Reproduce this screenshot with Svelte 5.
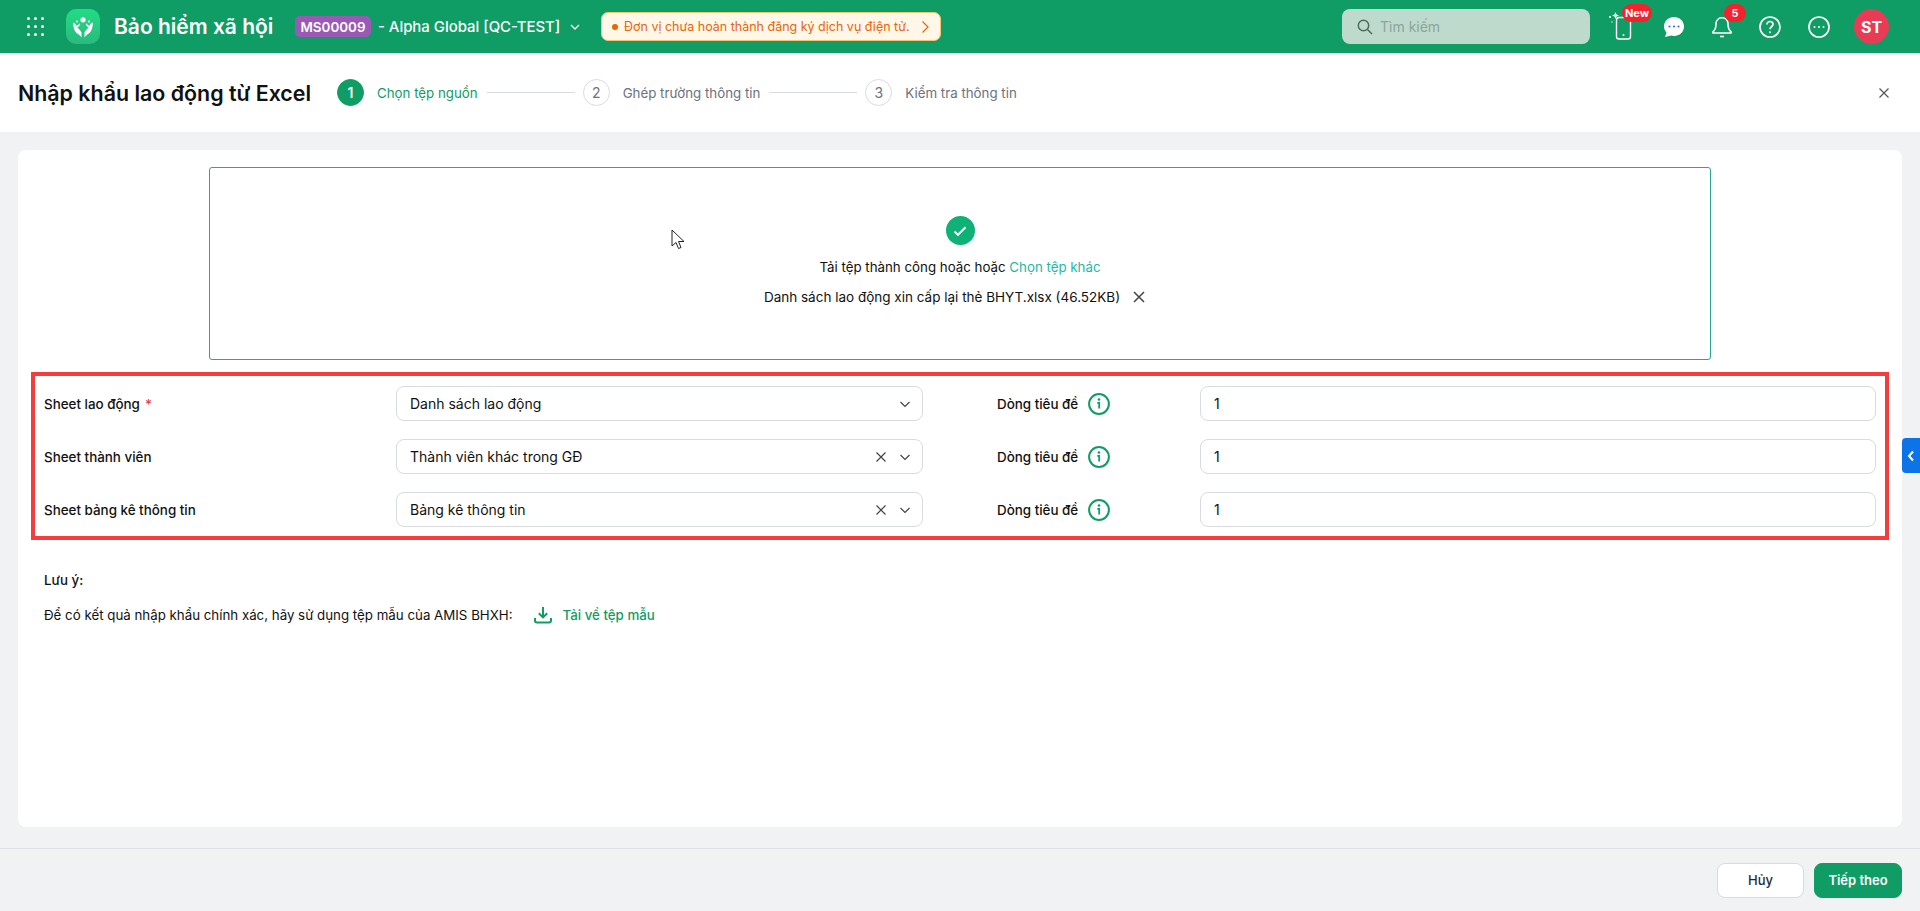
<script>
  const steps = [
    { n: 1, label: 'Chọn tệp nguồn', active: true },
    { n: 2, label: 'Ghép trường thông tin' },
    { n: 3, label: 'Kiểm tra thông tin' }
  ];
  const sheets = [
    { label: 'Sheet lao động', required: true, value: 'Danh sách lao động', clearable: false },
    { label: 'Sheet thành viên', value: 'Thành viên khác trong GĐ', clearable: true },
    { label: 'Sheet bảng kê thông tin', value: 'Bảng kê thông tin', clearable: true }
  ];
</script>

<div class="page">
  <header class="topbar">
    <div class="dots">
      {#each Array(9) as _}<i></i>{/each}
    </div>
    <div class="logo">
      <svg width="24" height="24" viewBox="0 0 24 24" fill="#fff">
        <circle cx="12" cy="4.800" r="2.600" />
        <circle cx="6" cy="6.500" r="1.100" />
        <circle cx="18" cy="6.500" r="1.100" />
        <path d="M2 7.500c1.800.4 2.900 1.500 3.400 3.200 1.200-.2 2.300-1 3-2.200l.9.600c-.7 1.900-1.800 3.100-3.300 3.700 2 1 3.500 2.600 4.500 4.700V22.500c-1.300-1.900-3-3.100-4.900-4.400C3.300 16.200 2.200 12 2 7.500z" />
        <path d="M22 7.500c-1.800.4-2.900 1.500-3.400 3.200-1.200-.2-2.300-1-3-2.200l-.9.600c.7 1.900 1.800 3.100 3.300 3.700-2 1-3.500 2.600-4.500 4.700V22.500c1.300-1.900 3-3.100 4.900-4.400C20.700 16.200 21.800 12 22 7.500z" />
      </svg>
    </div>
    <div class="app-name">Bảo hiểm xã hội</div>
    <span class="code">MS00009</span>
    <span class="org">- Alpha Global [QC-TEST]</span>
    <svg class="org-caret" width="12" height="12" viewBox="0 0 12 12" fill="none" stroke="#fff" stroke-width="1.300"><path d="M2 4l4 4 4-4" /></svg>
    <div class="warn">
      <i class="warn-dot"></i>
      <span>Đơn vị chưa hoàn thành đăng ký dịch vụ điện tử.</span>
      <svg width="10" height="14" viewBox="0 0 10 14" fill="none" stroke="#e8650a" stroke-width="1.200"><path d="M2.500 1.500L8 7l-5.500 5.500" /></svg>
    </div>

    <div class="spacer"></div>

    <div class="search">
      <svg width="18" height="18" viewBox="0 0 18 18" fill="none" stroke="#53685f" stroke-width="1.500"><circle cx="7.500" cy="7.500" r="5.200" /><path d="M11.500 11.500L16 16" /></svg>
      <span>Tìm kiếm</span>
    </div>

    <div class="tools">
      <div class="tool phone">
        <svg width="36" height="36" viewBox="0 0 36 36" fill="none">
          <rect x="10.500" y="8.500" width="14" height="21.500" rx="2.500" stroke="#fff" stroke-width="1.400" />
          <circle cx="17.500" cy="26" r="1" fill="#fff" />
          <path d="M9.500 3l1 2.500 2.500 1-2.500 1-1 2.500-1-2.500L6 6.500l2.500-1z" fill="#fff" />
          <circle cx="4" cy="8" r="1" fill="#fff" />
          <circle cx="6" cy="13" r=".7" fill="#fff" />
        </svg>
        <span class="badge new">New</span>
      </div>
      <div class="tool chat">
        <svg width="24" height="24" viewBox="0 0 24 24">
          <path d="M12 2c5.500 0 10 4.100 10 9.500S17.500 21 12 21c-1 0-2-.1-2.900-.4L3 22l1.500-4.400C3 15.900 2 13.800 2 11.500 2 6.100 6.500 2 12 2z" fill="#fff" />
          <circle cx="7.500" cy="11.500" r="1.100" fill="#3d6ff0" />
          <circle cx="12" cy="11.500" r="1.100" fill="#3d6ff0" />
          <circle cx="16.500" cy="11.500" r="1.100" fill="#3d6ff0" />
        </svg>
      </div>
      <div class="tool bell">
        <svg width="24" height="24" viewBox="0 0 24 24" fill="none" stroke="#fff" stroke-width="1.600">
          <path d="M12 2.800c-3.800 0-6 3-6 6.400 0 4-1 5.800-3 7.600-.5.500-.2 1.200.5 1.200h17c.7 0 1-.7.500-1.200-2-1.800-3-3.600-3-7.600 0-3.400-2.200-6.400-6-6.400z" />
          <path d="M10 21.500h4" />
        </svg>
        <span class="badge count">5</span>
      </div>
      <div class="tool help">
        <svg width="24" height="24" viewBox="0 0 24 24" fill="none" stroke="#fff" stroke-width="1.700">
          <circle cx="12" cy="12" r="10" />
          <path d="M9 9.500c0-1.800 1.300-3 3-3s3 1.200 3 2.800c0 2.400-3 2.500-3 5" />
          <circle cx="12" cy="17.300" r="1" fill="#fff" stroke="none" />
        </svg>
      </div>
      <div class="tool">
        <svg width="24" height="24" viewBox="0 0 24 24" fill="none" stroke="#fff" stroke-width="1.700">
          <circle cx="12" cy="12" r="10" />
          <circle cx="7.500" cy="12" r="1" fill="#fff" stroke="none" />
          <circle cx="12" cy="12" r="1" fill="#fff" stroke="none" />
          <circle cx="16.500" cy="12" r="1" fill="#fff" stroke="none" />
        </svg>
      </div>
      <div class="avatar">ST</div>
    </div>
  </header>

  <div class="titlebar">
    <h1>Nhập khẩu lao động từ Excel</h1>
    <ol class="steps">
      {#each steps as step, i}
        <li class="step" class:active={step.active}>
          <span class="num">{step.n}</span>
          <span class="step-label">{step.label}</span>
          {#if i < steps.length - 1}<span class="line"></span>{/if}
        </li>
      {/each}
    </ol>
    <svg class="close" width="12" height="12" viewBox="0 0 12 12" stroke="#555" stroke-width="1.200"><path d="M1.500 1.500l9 9M10.500 1.500l-9 9" /></svg>
  </div>

  <main class="main">
    <section class="card">
      <div class="upload">
        <div class="ok">
          <svg width="16" height="16" viewBox="0 0 16 16" fill="none" stroke="#fff" stroke-width="2"><path d="M2.500 8.500l3.500 3.300 7.500-7.500" /></svg>
        </div>
        <p class="upload-msg">Tải tệp thành công hoặc hoặc <a href="#top">Chọn tệp khác</a></p>
        <p class="file">
          <span>Danh sách lao động xin cấp lại thẻ BHYT.xlsx (46.52KB)</span>
          <svg width="12" height="12" viewBox="0 0 12 12" stroke="#444" stroke-width="1.500"><path d="M1 1l10 10M11 1L1 11" /></svg>
        </p>
      </div>

      <div class="sheets">
        {#each sheets as s}
          <div class="label">{s.label}{#if s.required}<em>*</em>{/if}</div>
          <div class="select">
            <span class="value">{s.value}</span>
            {#if s.clearable}
              <svg class="clear" width="12" height="12" viewBox="0 0 12 12" stroke="#444" stroke-width="1.200"><path d="M1.500 1.500l9 9M10.500 1.500l-9 9" /></svg>
            {/if}
            <svg width="12" height="12" viewBox="0 0 12 12" fill="none" stroke="#444" stroke-width="1.200"><path d="M1.500 4l4.500 4.500L10.500 4" /></svg>
          </div>
          <div></div>
          <div class="label right">
            Dòng tiêu đề
            <svg width="22" height="22" viewBox="0 0 22 22" fill="none" stroke="#0f9d66">
              <circle cx="11" cy="11" r="9.900" stroke-width="2" />
              <circle cx="11" cy="6.500" r="1.300" fill="#0f9d66" stroke="none" />
              <path d="M9.300 9.800H11.200V15.500" stroke-width="1.800" />
            </svg>
          </div>
          <div class="input">1</div>
        {/each}
      </div>

      <div class="notes">
        <p class="note-title">Lưu ý:</p>
        <p class="note-line">
          <span>Để có kết quả nhập khẩu chính xác, hãy sử dụng tệp mẫu của AMIS BHXH:</span>
          <a href="#top" class="download">
            <svg width="18" height="18" viewBox="0 0 18 18" fill="none" stroke="#109c65" stroke-width="2"><path d="M9 1v10M4.800 7.200L9 11.400l4.200-4.200M1 12v2.500a2 2 0 0 0 2 2h12a2 2 0 0 0 2-2V12" /></svg>
            Tải về tệp mẫu
          </a>
        </p>
      </div>
    </section>
    <button class="side-tab" aria-label="Mở rộng">
      <svg width="8" height="12" viewBox="0 0 8 12" fill="none" stroke="#fff" stroke-width="2"><path d="M6 1.500L2 6l4 4.500" /></svg>
    </button>
  </main>

  <footer class="footer">
    <button class="btn">Hủy</button>
    <button class="btn primary">Tiếp theo</button>
  </footer>

  <svg class="cursor" width="14" height="22" viewBox="0 0 14 22" fill="#fff" stroke="#222" stroke-width="1"><path d="M1 1v16l4-3.500 2.500 6 2.500-1-2.500-6H13z" /></svg>
</div>

<style>
  :global(body) {
    margin: 0;
    background: #f0f2f4;
    font-family: Inter, "Noto Sans", sans-serif;
    color: #111;
  }
  * {
    box-sizing: border-box;
  }
  p, h1, ol {
    margin: 0;
    padding: 0;
  }
  a {
    text-decoration: none;
  }
  .page {
    position: relative;
    height: 911px;
    display: flex;
    flex-direction: column;
    overflow: hidden;
  }

  /* top bar */
  .topbar {
    height: 53px;
    flex: none;
    display: flex;
    align-items: center;
    background: #109c65;
    color: #fff;
    padding: 0 31px 0 27px;
  }
  .dots {
    display: grid;
    grid-template-columns: repeat(3, 3px);
    gap: 5px 4px;
    margin-right: 22px;
    width: 17px;
  }
  .dots i {
    width: 3px;
    height: 3px;
    border-radius: 50%;
    background: #fff;
  }
  .logo {
    width: 34px;
    height: 35px;
    border-radius: 10px;
    background: linear-gradient(180deg, #22dc84, #2ab97f);
    display: flex;
    align-items: center;
    justify-content: center;
    margin-right: 14px;
  }
  .app-name {
    font-size: 21px;
    font-weight: 600;
    width: 181px;
    white-space: nowrap;
  }
  .code {
    width: 76px;
    height: 21px;
    border-radius: 5px;
    background: #9b59b6;
    font-size: 13.4px;
    font-weight: 600;
    display: flex;
    align-items: center;
    justify-content: center;
    margin-right: 7px;
  }
  .org {
    font-size: 14.9px;
    font-weight: 500;
    white-space: nowrap;
    width: 191px;
  }
  .org-caret {
    margin-right: 20px;
  }
  .warn {
    width: 340px;
    height: 29px;
    border-radius: 7px;
    background: #fff7e8;
    border: 1px solid #f6c56f;
    color: #e8650a;
    font-size: 12.5px;
    display: flex;
    align-items: center;
    padding: 0 10px;
    gap: 6px;
  }
  .warn span {
    flex: 1;
    white-space: nowrap;
  }
  .warn-dot {
    flex: none;
    width: 6px;
    height: 6px;
    border-radius: 50%;
    background: #e8650a;
  }
  .spacer {
    flex: 1;
  }
  .search {
    width: 248px;
    height: 35px;
    border-radius: 8px;
    background: #bedacd;
    display: flex;
    align-items: center;
    gap: 6px;
    padding: 0 14px;
    color: #8aa69a;
    font-size: 14px;
  }
  .tools {
    display: flex;
    align-items: center;
    margin-left: 16px;
  }
  .tool {
    position: relative;
    width: 36px;
    height: 36px;
    margin-right: 13px;
    display: flex;
    align-items: center;
    justify-content: center;
  }
  .phone {
    margin-right: 14px;
  }
  .chat, .bell {
    margin-right: 12px;
  }
  .badge {
    position: absolute;
    top: -5px;
    height: 18px;
    border-radius: 9px;
    background: #f5222d;
    color: #fff;
    font-size: 11px;
    font-weight: 700;
    display: flex;
    align-items: center;
    justify-content: center;
  }
  .badge.new {
    left: 16px;
    width: 30px;
  }
  .badge.count {
    left: 20px;
    width: 22px;
  }
  .avatar {
    width: 35px;
    height: 35px;
    border-radius: 50%;
    background: #e93b55;
    font-size: 16px;
    font-weight: 700;
    display: flex;
    align-items: center;
    justify-content: center;
    margin-left: 4px;
  }

  /* title row with the steps */
  .titlebar {
    height: 79px;
    flex: none;
    background: #fff;
    display: flex;
    align-items: center;
    padding: 0 30px 0 18px;
  }
  h1 {
    font-size: 21.4px;
    font-weight: 600;
    width: 319px;
    white-space: nowrap;
  }
  .steps {
    list-style: none;
    display: flex;
    flex: 1;
  }
  .step {
    display: flex;
    align-items: center;
    font-size: 13.3px;
    color: #6b7280;
    white-space: nowrap;
  }
  .num {
    width: 27px;
    height: 27px;
    border-radius: 50%;
    border: 1px solid #d8dbe0;
    display: flex;
    align-items: center;
    justify-content: center;
    font-size: 14px;
    margin-right: 13px;
  }
  .line {
    width: 88px;
    height: 1px;
    background: #d8dbe0;
    margin: 0 8px 0 9px;
  }
  .step.active {
    color: #109c65;
  }
  .active .num {
    background: #109c65;
    border-color: #109c65;
    color: #fff;
    font-weight: 600;
  }

  /* main card */
  .main {
    flex: 1;
    position: relative;
    padding: 18px 18px 21px;
    display: flex;
    min-height: 0;
  }
  .card {
    flex: 1;
    background: #fff;
    border-radius: 8px;
    padding: 17px 13px 0;
  }
  .upload {
    width: 1502px;
    height: 193px;
    margin: 0 auto 12px;
    border: 1px solid #26a69a;
    border-radius: 3px;
    display: flex;
    flex-direction: column;
    align-items: center;
    padding-top: 48px;
    font-size: 13.3px;
  }
  .ok {
    width: 29px;
    height: 29px;
    border-radius: 50%;
    background: #0fb176;
    display: flex;
    align-items: center;
    justify-content: center;
    margin-bottom: 14px;
  }
  .upload-msg {
    height: 16px;
    line-height: 16px;
    margin-bottom: 14px;
  }
  .upload-msg a {
    color: #1cb9a6;
  }
  .file {
    display: flex;
    align-items: center;
    gap: 13px;
    height: 16px;
    line-height: 16px;
    font-size: 13.5px;
    margin-right: 11px;
  }
  .sheets {
    border: 4px solid #f53d3d;
    height: 168px;
    display: grid;
    grid-template-columns: 352px 527px 74px 203px 1fr;
    grid-auto-rows: 35px;
    row-gap: 18px;
    padding: 10px 9px 0 9px;
    align-items: center;
    font-size: 14px;
  }
  .label {
    font-size: 13.4px;
    font-weight: 500;
  }
  .label em {
    color: #e53935;
    font-style: normal;
    margin-left: 5px;
  }
  .label.right {
    display: flex;
    align-items: center;
    gap: 10px;
  }
  .select, .input {
    height: 35px;
    border: 1px solid #d8dbe0;
    border-radius: 8px;
    display: flex;
    align-items: center;
    padding: 0 11px 0 13px;
    background: #fff;
  }
  .value {
    flex: 1;
  }
  .clear {
    margin-right: 12px;
  }
  .notes {
    padding-left: 13px;
    font-size: 13.3px;
  }
  .note-title {
    font-weight: 500;
    margin-top: 32px;
    height: 16px;
    line-height: 16px;
  }
  .note-line {
    display: flex;
    align-items: center;
    margin-top: 19px;
    height: 16px;
  }
  .download {
    display: flex;
    align-items: center;
    gap: 11px;
    margin-left: 21px;
    color: #109c65;
    font-weight: 500;
  }
  .side-tab {
    position: absolute;
    right: 0;
    top: 306px;
    width: 18px;
    height: 35px;
    border: 0;
    padding: 0;
    border-radius: 4px 0 0 4px;
    background: #0d74e8;
    display: flex;
    align-items: center;
    justify-content: center;
  }

  /* footer */
  .footer {
    height: 63px;
    flex: none;
    border-top: 1px solid #dcdfe4;
    display: flex;
    justify-content: flex-end;
    align-items: center;
    gap: 10px;
    padding: 0 18px 0 0;
  }
  .btn {
    width: 87px;
    height: 35px;
    border: 1px solid #d8dbe0;
    border-radius: 8px;
    background: #fff;
    font: 500 13px Inter, sans-serif;
    color: #1f2937;
  }
  .btn.primary {
    width: 88px;
    background: #109c65;
    border-color: #109c65;
    color: #fff;
    font-weight: 600;
  }
  .cursor {
    position: absolute;
    left: 671px;
    top: 229px;
  }
</style>
